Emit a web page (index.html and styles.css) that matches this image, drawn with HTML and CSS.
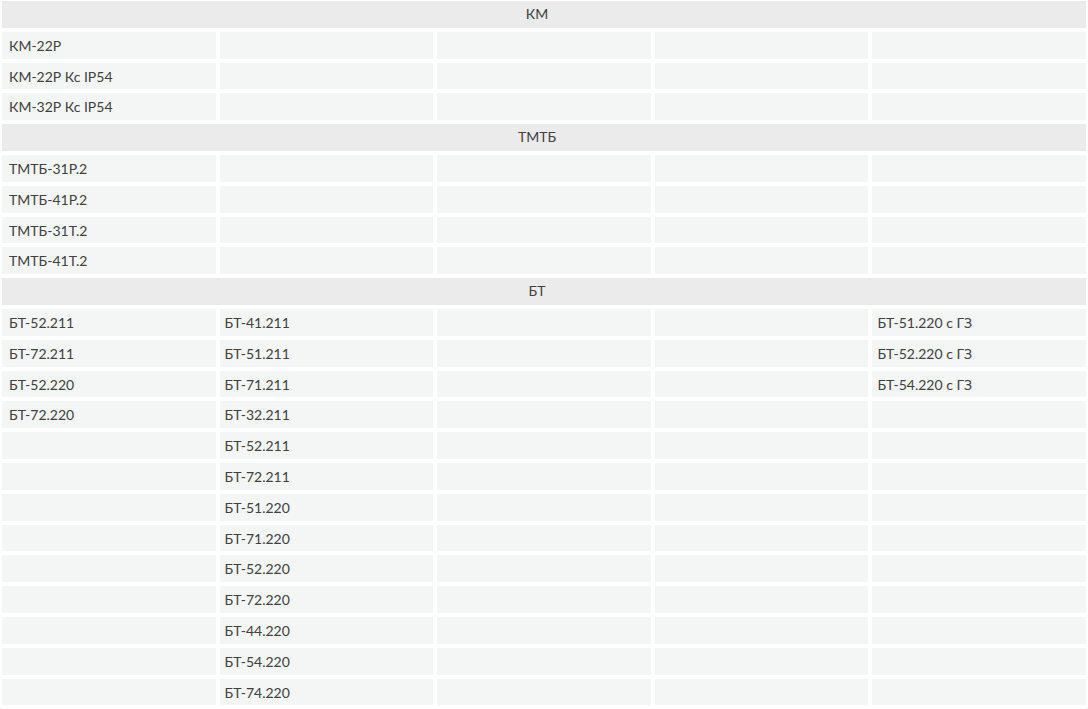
FILE: index.html
```html
<!DOCTYPE html>
<html lang="ru">
<head>
<meta charset="utf-8">
<link rel="stylesheet" href="styles.css">
</head>
<body>
<div class="table">
  <div class="group">КМ</div>
  <div class="row"><div class="cell">КМ-22Р</div><div class="cell"></div><div class="cell"></div><div class="cell"></div><div class="cell"></div></div>
  <div class="row"><div class="cell">КМ-22Р Кс IP54</div><div class="cell"></div><div class="cell"></div><div class="cell"></div><div class="cell"></div></div>
  <div class="row"><div class="cell">КМ-32Р Кс IP54</div><div class="cell"></div><div class="cell"></div><div class="cell"></div><div class="cell"></div></div>
  <div class="group">ТМТБ</div>
  <div class="row"><div class="cell">ТМТБ-31Р.2</div><div class="cell"></div><div class="cell"></div><div class="cell"></div><div class="cell"></div></div>
  <div class="row"><div class="cell">ТМТБ-41Р.2</div><div class="cell"></div><div class="cell"></div><div class="cell"></div><div class="cell"></div></div>
  <div class="row"><div class="cell">ТМТБ-31Т.2</div><div class="cell"></div><div class="cell"></div><div class="cell"></div><div class="cell"></div></div>
  <div class="row"><div class="cell">ТМТБ-41Т.2</div><div class="cell"></div><div class="cell"></div><div class="cell"></div><div class="cell"></div></div>
  <div class="group">БТ</div>
  <div class="row"><div class="cell">БТ-52.211</div><div class="cell">БТ-41.211</div><div class="cell"></div><div class="cell"></div><div class="cell">БТ-51.220 с ГЗ</div></div>
  <div class="row"><div class="cell">БТ-72.211</div><div class="cell">БТ-51.211</div><div class="cell"></div><div class="cell"></div><div class="cell">БТ-52.220 с ГЗ</div></div>
  <div class="row"><div class="cell">БТ-52.220</div><div class="cell">БТ-71.211</div><div class="cell"></div><div class="cell"></div><div class="cell">БТ-54.220 с ГЗ</div></div>
  <div class="row"><div class="cell">БТ-72.220</div><div class="cell">БТ-32.211</div><div class="cell"></div><div class="cell"></div><div class="cell"></div></div>
  <div class="row"><div class="cell"></div><div class="cell">БТ-52.211</div><div class="cell"></div><div class="cell"></div><div class="cell"></div></div>
  <div class="row"><div class="cell"></div><div class="cell">БТ-72.211</div><div class="cell"></div><div class="cell"></div><div class="cell"></div></div>
  <div class="row"><div class="cell"></div><div class="cell">БТ-51.220</div><div class="cell"></div><div class="cell"></div><div class="cell"></div></div>
  <div class="row"><div class="cell"></div><div class="cell">БТ-71.220</div><div class="cell"></div><div class="cell"></div><div class="cell"></div></div>
  <div class="row"><div class="cell"></div><div class="cell">БТ-52.220</div><div class="cell"></div><div class="cell"></div><div class="cell"></div></div>
  <div class="row"><div class="cell"></div><div class="cell">БТ-72.220</div><div class="cell"></div><div class="cell"></div><div class="cell"></div></div>
  <div class="row"><div class="cell"></div><div class="cell">БТ-44.220</div><div class="cell"></div><div class="cell"></div><div class="cell"></div></div>
  <div class="row"><div class="cell"></div><div class="cell">БТ-54.220</div><div class="cell"></div><div class="cell"></div><div class="cell"></div></div>
  <div class="row"><div class="cell"></div><div class="cell">БТ-74.220</div><div class="cell"></div><div class="cell"></div><div class="cell"></div></div>
</div>
</body>
</html>
```
FILE: styles.css
```css
html, body {
  margin: 0;
  padding: 0;
  background: #ffffff;
}
body {
  font-family: Lato, "Noto Sans", sans-serif;
  font-size: 14px;
  color: #404040;
}
.table {
  display: grid;
  grid-template-columns: repeat(5, 1fr);
  grid-auto-rows: 26.8px;
  gap: 4px;
  padding: 1px 2px;
}
.row {
  display: contents;
}
.group {
  grid-column: 1 / -1;
  background: #ebebeb;
  text-align: center;
  line-height: 26px;
  padding-right: 14px;
}
.cell {
  background: #f4f5f5;
  padding: 0 5px;
  line-height: 27px;
  white-space: nowrap;
}
.row > .cell:first-child {
  padding-left: 7px;
}
```
